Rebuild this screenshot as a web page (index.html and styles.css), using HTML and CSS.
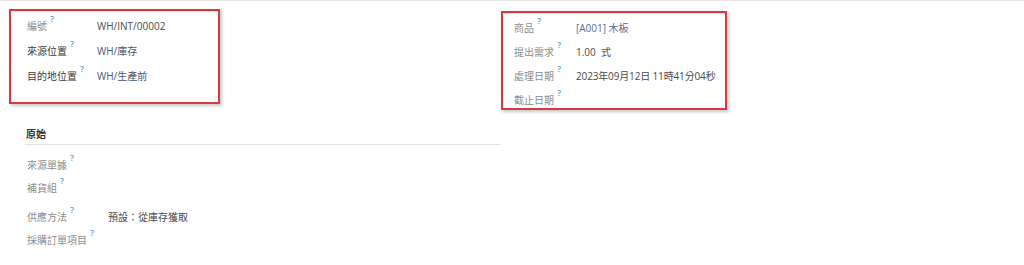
FILE: index.html
```html
<!DOCTYPE html>
<html lang="zh-Hant">
<head>
<meta charset="utf-8">
<title>WH/INT/00002</title>
<link rel="stylesheet" href="styles.css">
</head>
<body>
<div class="page">
  <div class="top">
    <div class="box box-left">
      <div class="row"><span class="label light">編號<sup class="q">?</sup></span><span class="value">WH/INT/00002</span></div>
      <div class="row"><span class="label">來源位置<sup class="q">?</sup></span><span class="value link">WH/庫存</span></div>
      <div class="row"><span class="label">目的地位置<sup class="q">?</sup></span><span class="value link">WH/生產前</span></div>
    </div>
    <div class="box box-right">
      <div class="row"><span class="label light">商品<sup class="q">?</sup></span><span class="value link2">[A001] 木板</span></div>
      <div class="row"><span class="label light">提出需求<sup class="q">?</sup></span><span class="value">1.00&nbsp; 式</span></div>
      <div class="row"><span class="label light">處理日期<sup class="q">?</sup></span><span class="value date">2023年09月12日 11時41分04秒</span></div>
      <div class="row"><span class="label light">截止日期<sup class="q">?</sup></span><span class="value"></span></div>
    </div>
  </div>
  <div class="section">
    <div class="section-title">原始</div>
    <div class="rows">
      <div class="srow"><span class="label light">來源單據<sup class="q">?</sup></span></div>
      <div class="srow"><span class="label light">補貨組<sup class="q">?</sup></span></div>
      <div class="srow tall"><span class="label light slabel">供應方法<sup class="q">?</sup></span><span class="value">預設：從庫存獲取</span></div>
      <div class="srow"><span class="label light">採購訂單項目<sup class="q">?</sup></span></div>
    </div>
  </div>
</div>
</body>
</html>
```

FILE: styles.css
```css
html, body {
  margin: 0;
  padding: 0;
  background: #ffffff;
}
body {
  font-family: "Open Sans", "Noto Sans CJK TC", sans-serif;
  font-size: 10px;
  line-height: 14px;
  color: #444;
}
.page {
  border-top: 1px solid #e6e6e6;
  height: 264px;
}
.top {
  display: flex;
  align-items: flex-start;
  padding: 8px 0 0 9px;
  gap: 281px;
}
.box {
  border: 2px solid #d8393d;
  box-shadow: 2px 2px 3px rgba(0, 0, 0, 0.22), inset 1px 1px 0 #ececec;
  display: flex;
  flex-direction: column;
}
.box-left {
  padding: 8px 0 19px 16px;
  gap: 11px;
  width: 191px;
}
.box-right {
  margin-top: 2px;
  width: 211px;
  padding: 8px 0 1px 11px;
  gap: 10px;
}
.row {
  display: flex;
  height: 14px;
  white-space: nowrap;
}
.box-left .label {
  width: 70px;
}
.box-right .label {
  width: 62px;
}
.label {
  color: #3a3a3a;
  flex: none;
}
.label.light {
  color: #8c8c8c;
}
.q {
  font-size: 9px;
  font-weight: 600;
  line-height: 1;
  color: #5e9bcb;
  vertical-align: top;
  position: relative;
  top: -5px;
  margin-left: 3px;
}
.value {
  color: #4a4a4a;
}
.value.date {
  letter-spacing: -0.15px;
}
.value.link {
  color: #4d5470;
}
.value.link2 {
  color: #5b6991;
}
.section {
  margin-top: 17px;
  margin-left: 25px;
  width: 475px;
}
.section-title {
  padding-left: 1px;
  font-weight: 700;
  color: #333;
  padding-bottom: 3px;
  border-bottom: 1px solid #e2e2e2;
}
.rows {
  display: flex;
  flex-direction: column;
  gap: 9px;
  padding-top: 13px;
  padding-left: 2px;
}
.srow {
  display: flex;
  height: 14px;
  white-space: nowrap;
}
.srow.tall {
  padding-top: 6px;
}
.slabel {
  width: 81px;
}
```
